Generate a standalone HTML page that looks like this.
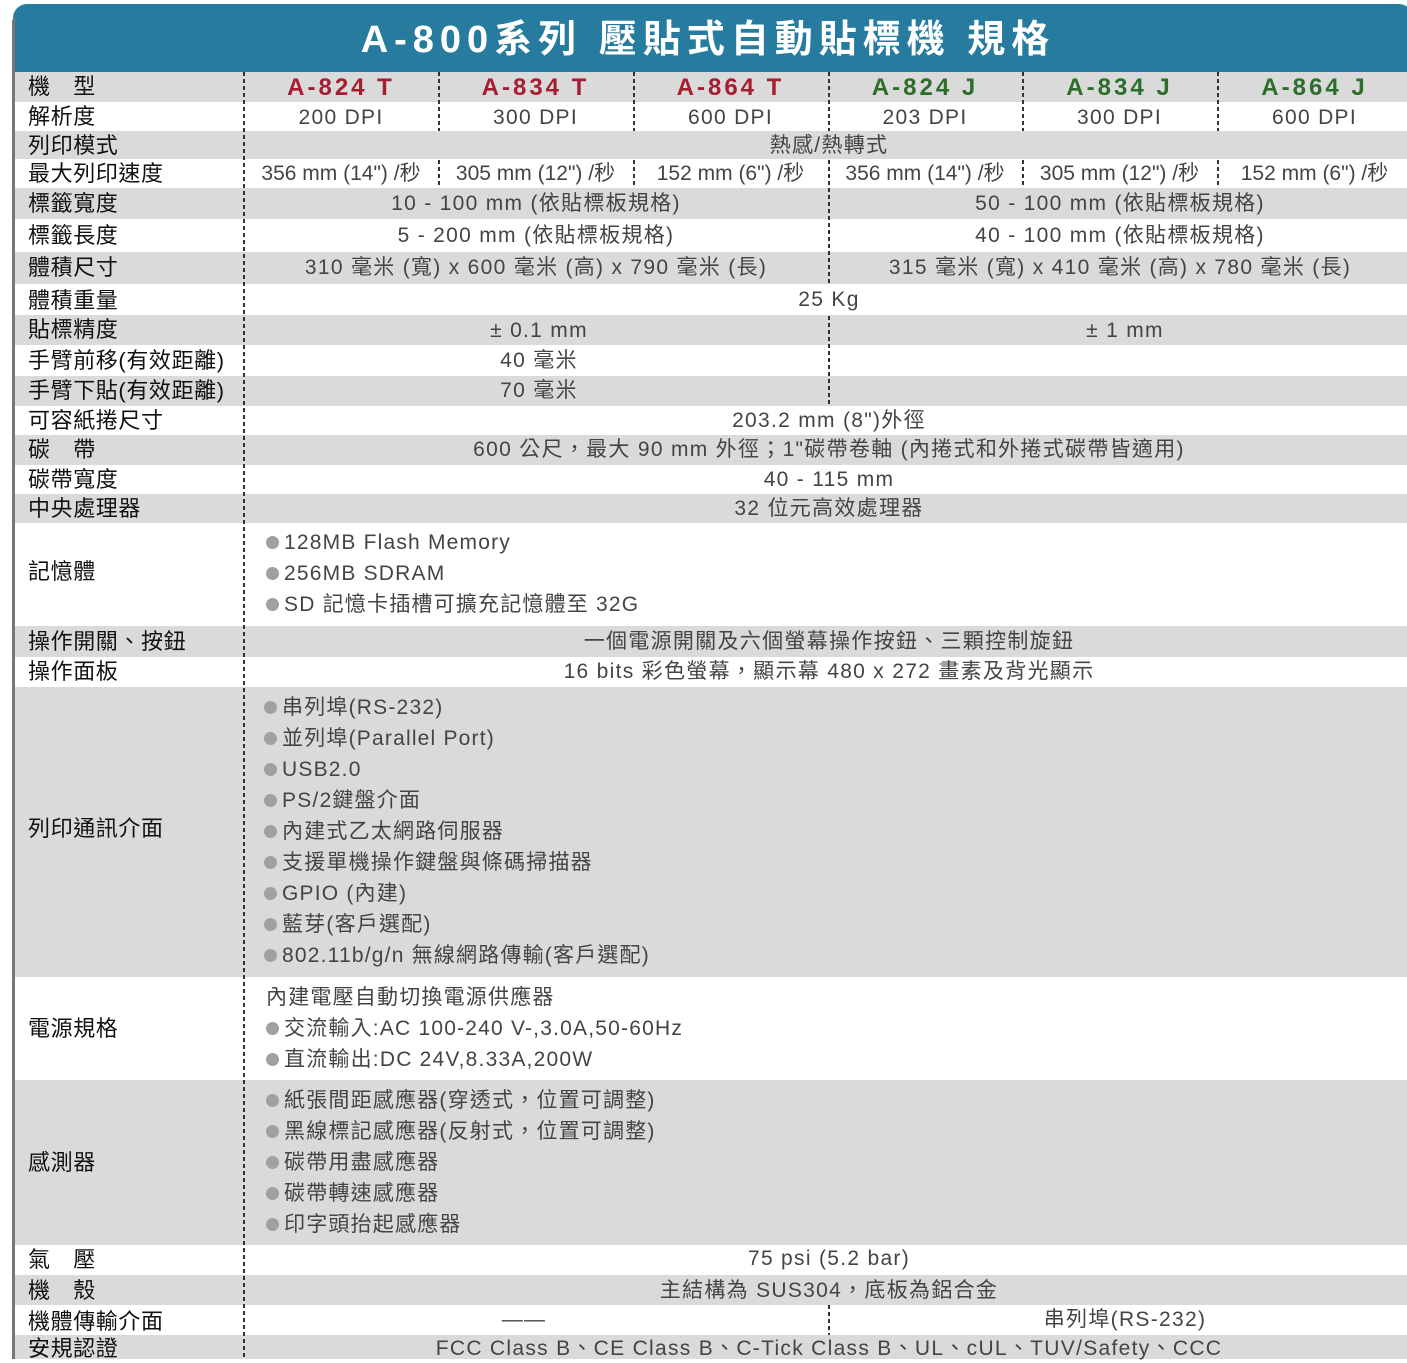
<!DOCTYPE html>
<html><head><meta charset="utf-8"><style>
*{margin:0;padding:0;box-sizing:border-box}
body{width:1407px;height:1359px;overflow:hidden;background:#fff;position:relative;font-family:"Liberation Sans","Noto Sans CJK TC",sans-serif}
.hd{position:absolute;left:13px;top:4px;width:1400px;height:68px;background:#277b9f;border-radius:14px 14px 0 0;color:#fff;font-weight:bold;font-size:38px;letter-spacing:6px;text-align:center;line-height:72px;padding-right:10px}
.bl{position:absolute;left:12px;top:18px;width:3px;height:1341px;background:#777;border-radius:3px 0 0 0}
.r{position:absolute;left:15px;width:1392px}
.g{background:#dadada}
.l{position:absolute;left:28px;font-size:22px;color:#111;white-space:nowrap;letter-spacing:.6px}
.c{position:absolute;text-align:center;font-size:21px;color:#444;white-space:nowrap;letter-spacing:1.3px}
.v{position:absolute;width:2px;background:repeating-linear-gradient(#333 0 4px,transparent 4px 7px)}
.m{font-weight:bold;font-size:24px;letter-spacing:3px}
.red{color:#a51d30}.grn{color:#2d6e2a}
.ls{position:absolute;left:266px;font-size:21px;color:#444;line-height:31px;white-space:nowrap;letter-spacing:1.2px}
.b{display:inline-block;width:13px;height:13px;border-radius:50%;background:#a0a0a0;margin-right:5px;vertical-align:0}
</style></head><body>
<div class="hd">A-800系列 壓貼式自動貼標機 規格</div>
<div class="bl"></div>

<div class="r g" style="top:72px;height:30px"></div>
<div class="r g" style="top:131px;height:28px"></div>
<div class="r g" style="top:188px;height:31px"></div>
<div class="r g" style="top:252px;height:32px"></div>
<div class="r g" style="top:315px;height:30px"></div>
<div class="r g" style="top:376px;height:30px"></div>
<div class="r g" style="top:435px;height:30px"></div>
<div class="r g" style="top:494px;height:29px"></div>
<div class="r g" style="top:626px;height:31px"></div>
<div class="r g" style="top:687px;height:290px"></div>
<div class="r g" style="top:1080px;height:165px"></div>
<div class="r g" style="top:1275px;height:30px"></div>
<div class="r g" style="top:1335px;height:24px"></div>

<!-- labels -->
<div class="l" style="top:72px;line-height:30px">機　型</div>
<div class="l" style="top:102px;line-height:29px">解析度</div>
<div class="l" style="top:131px;line-height:30px">列印模式</div>
<div class="l" style="top:159px;line-height:29px">最大列印速度</div>
<div class="l" style="top:188px;line-height:31px">標籤寬度</div>
<div class="l" style="top:219px;line-height:33px">標籤長度</div>
<div class="l" style="top:252px;line-height:32px">體積尺寸</div>
<div class="l" style="top:284px;line-height:33px">體積重量</div>
<div class="l" style="top:315px;line-height:30px">貼標精度</div>
<div class="l" style="top:345px;line-height:31px">手臂前移(有效距離)</div>
<div class="l" style="top:376px;line-height:30px">手臂下貼(有效距離)</div>
<div class="l" style="top:406px;line-height:29px">可容紙捲尺寸</div>
<div class="l" style="top:435px;line-height:30px">碳　帶</div>
<div class="l" style="top:465px;line-height:29px">碳帶寬度</div>
<div class="l" style="top:494px;line-height:29px">中央處理器</div>
<div class="l" style="top:523px;line-height:97px">記憶體</div>
<div class="l" style="top:626px;line-height:31px">操作開關、按鈕</div>
<div class="l" style="top:657px;line-height:30px">操作面板</div>
<div class="l" style="top:687px;line-height:284px">列印通訊介面</div>
<div class="l" style="top:977px;line-height:103px">電源規格</div>
<div class="l" style="top:1080px;line-height:165px">感測器</div>
<div class="l" style="top:1245px;line-height:30px">氣　壓</div>
<div class="l" style="top:1275px;line-height:32px">機　殼</div>
<div class="l" style="top:1305px;line-height:34px">機體傳輸介面</div>
<div class="l" style="top:1335px;line-height:28px">安規認證</div>

<!-- models -->
<div class="c m red" style="top:72px;line-height:32px;left:244px;width:194px">A-824 T</div>
<div class="c m red" style="top:72px;line-height:32px;left:438px;width:195px">A-834 T</div>
<div class="c m red" style="top:72px;line-height:32px;left:633px;width:195px">A-864 T</div>
<div class="c m grn" style="top:72px;line-height:32px;left:828px;width:194px">A-824 J</div>
<div class="c m grn" style="top:72px;line-height:32px;left:1022px;width:195px">A-834 J</div>
<div class="c m grn" style="top:72px;line-height:32px;left:1217px;width:195px">A-864 J</div>

<div class="c" style="top:102px;line-height:31px;left:244px;width:194px">200 DPI</div>
<div class="c" style="top:102px;line-height:31px;left:438px;width:195px">300 DPI</div>
<div class="c" style="top:102px;line-height:31px;left:633px;width:195px">600 DPI</div>
<div class="c" style="top:102px;line-height:31px;left:828px;width:194px">203 DPI</div>
<div class="c" style="top:102px;line-height:31px;left:1022px;width:195px">300 DPI</div>
<div class="c" style="top:102px;line-height:31px;left:1217px;width:195px">600 DPI</div>

<div class="c" style="top:131px;line-height:30px;left:244px;width:1170px">熱感/熱轉式</div>

<div class="c" style="top:159px;line-height:29px;left:244px;width:194px;letter-spacing:0">356 mm (14") /秒</div>
<div class="c" style="top:159px;line-height:29px;left:438px;width:195px;letter-spacing:0">305 mm (12") /秒</div>
<div class="c" style="top:159px;line-height:29px;left:633px;width:195px;letter-spacing:0">152 mm (6") /秒</div>
<div class="c" style="top:159px;line-height:29px;left:828px;width:194px;letter-spacing:0">356 mm (14") /秒</div>
<div class="c" style="top:159px;line-height:29px;left:1022px;width:195px;letter-spacing:0">305 mm (12") /秒</div>
<div class="c" style="top:159px;line-height:29px;left:1217px;width:195px;letter-spacing:0">152 mm (6") /秒</div>

<div class="c" style="top:188px;line-height:31px;left:244px;width:584px">10 - 100 mm (依貼標板規格)</div>
<div class="c" style="top:188px;line-height:31px;left:828px;width:584px">50 - 100 mm (依貼標板規格)</div>
<div class="c" style="top:219px;line-height:33px;left:244px;width:584px">5 - 200 mm (依貼標板規格)</div>
<div class="c" style="top:219px;line-height:33px;left:828px;width:584px">40 - 100 mm (依貼標板規格)</div>
<div class="c" style="top:252px;line-height:32px;left:244px;width:584px">310 毫米 (寬) x 600 毫米 (高) x 790 毫米 (長)</div>
<div class="c" style="top:252px;line-height:32px;left:828px;width:584px">315 毫米 (寬) x 410 毫米 (高) x 780 毫米 (長)</div>
<div class="c" style="top:284px;line-height:31px;left:244px;width:1170px">25 Kg</div>
<div class="c" style="top:315px;line-height:32px;left:244px;width:590px">±  0.1 mm</div>
<div class="c" style="top:315px;line-height:32px;left:828px;width:594px">±  1 mm</div>
<div class="c" style="top:345px;line-height:31px;left:244px;width:590px">40 毫米</div>
<div class="c" style="top:376px;line-height:30px;left:244px;width:590px">70 毫米</div>
<div class="c" style="top:406px;line-height:29px;left:244px;width:1170px">203.2 mm (8")外徑</div>
<div class="c" style="top:435px;line-height:30px;left:244px;width:1170px">600 公尺，最大 90 mm 外徑；1"碳帶卷軸 (內捲式和外捲式碳帶皆適用)</div>
<div class="c" style="top:465px;line-height:29px;left:244px;width:1170px">40 - 115 mm</div>
<div class="c" style="top:494px;line-height:29px;left:244px;width:1170px">32 位元高效處理器</div>
<div class="c" style="top:626px;line-height:31px;left:244px;width:1170px">一個電源開關及六個螢幕操作按鈕、三顆控制旋鈕</div>
<div class="c" style="top:657px;line-height:30px;left:244px;width:1170px">16 bits 彩色螢幕，顯示幕 480 x 272 畫素及背光顯示</div>
<div class="c" style="top:1245px;line-height:28px;left:244px;width:1170px">75 psi (5.2 bar)</div>
<div class="c" style="top:1275px;line-height:32px;left:244px;width:1170px">主結構為 SUS304，底板為鋁合金</div>
<div class="c" style="top:1305px;line-height:30px;left:244px;width:560px">——</div>
<div class="c" style="top:1305px;line-height:30px;left:828px;width:594px">串列埠(RS-232)</div>
<div class="c" style="top:1335px;line-height:28px;left:244px;width:1170px">FCC Class B、CE Class B、C-Tick Class B、UL、cUL、TUV/Safety、CCC</div>

<div class="ls" style="top:527px"><span class="b"></span>128MB Flash Memory<br><span class="b"></span>256MB SDRAM<br><span class="b"></span>SD 記憶卡插槽可擴充記憶體至 32G</div>
<div class="ls" style="top:692px;left:264px"><span class="b"></span>串列埠(RS-232)<br><span class="b"></span>並列埠(Parallel Port)<br><span class="b"></span>USB2.0<br><span class="b"></span>PS/2鍵盤介面<br><span class="b"></span>內建式乙太網路伺服器<br><span class="b"></span>支援單機操作鍵盤與條碼掃描器<br><span class="b"></span>GPIO (內建)<br><span class="b"></span>藍芽(客戶選配)<br><span class="b"></span>802.11b/g/n 無線網路傳輸(客戶選配)</div>
<div class="ls" style="top:982px">內建電壓自動切換電源供應器<br><span class="b"></span>交流輸入:AC 100-240 V-,3.0A,50-60Hz<br><span class="b"></span>直流輸出:DC 24V,8.33A,200W</div>
<div class="ls" style="top:1085px"><span class="b"></span>紙張間距感應器(穿透式，位置可調整)<br><span class="b"></span>黑線標記感應器(反射式，位置可調整)<br><span class="b"></span>碳帶用盡感應器<br><span class="b"></span>碳帶轉速感應器<br><span class="b"></span>印字頭抬起感應器</div>

<!-- dotted lines -->
<div class="v" style="left:243px;top:72px;height:1287px"></div>
<div class="v" style="left:438px;top:72px;height:59px"></div>
<div class="v" style="left:633px;top:72px;height:59px"></div>
<div class="v" style="left:828px;top:72px;height:59px"></div>
<div class="v" style="left:1022px;top:72px;height:59px"></div>
<div class="v" style="left:1217px;top:72px;height:59px"></div>
<div class="v" style="left:438px;top:160px;height:28px"></div>
<div class="v" style="left:633px;top:160px;height:28px"></div>
<div class="v" style="left:1022px;top:160px;height:28px"></div>
<div class="v" style="left:1217px;top:160px;height:28px"></div>
<div class="v" style="left:828px;top:160px;height:124px"></div>
<div class="v" style="left:828px;top:316px;height:90px"></div>
<div class="v" style="left:828px;top:1305px;height:30px"></div>
</body></html>
